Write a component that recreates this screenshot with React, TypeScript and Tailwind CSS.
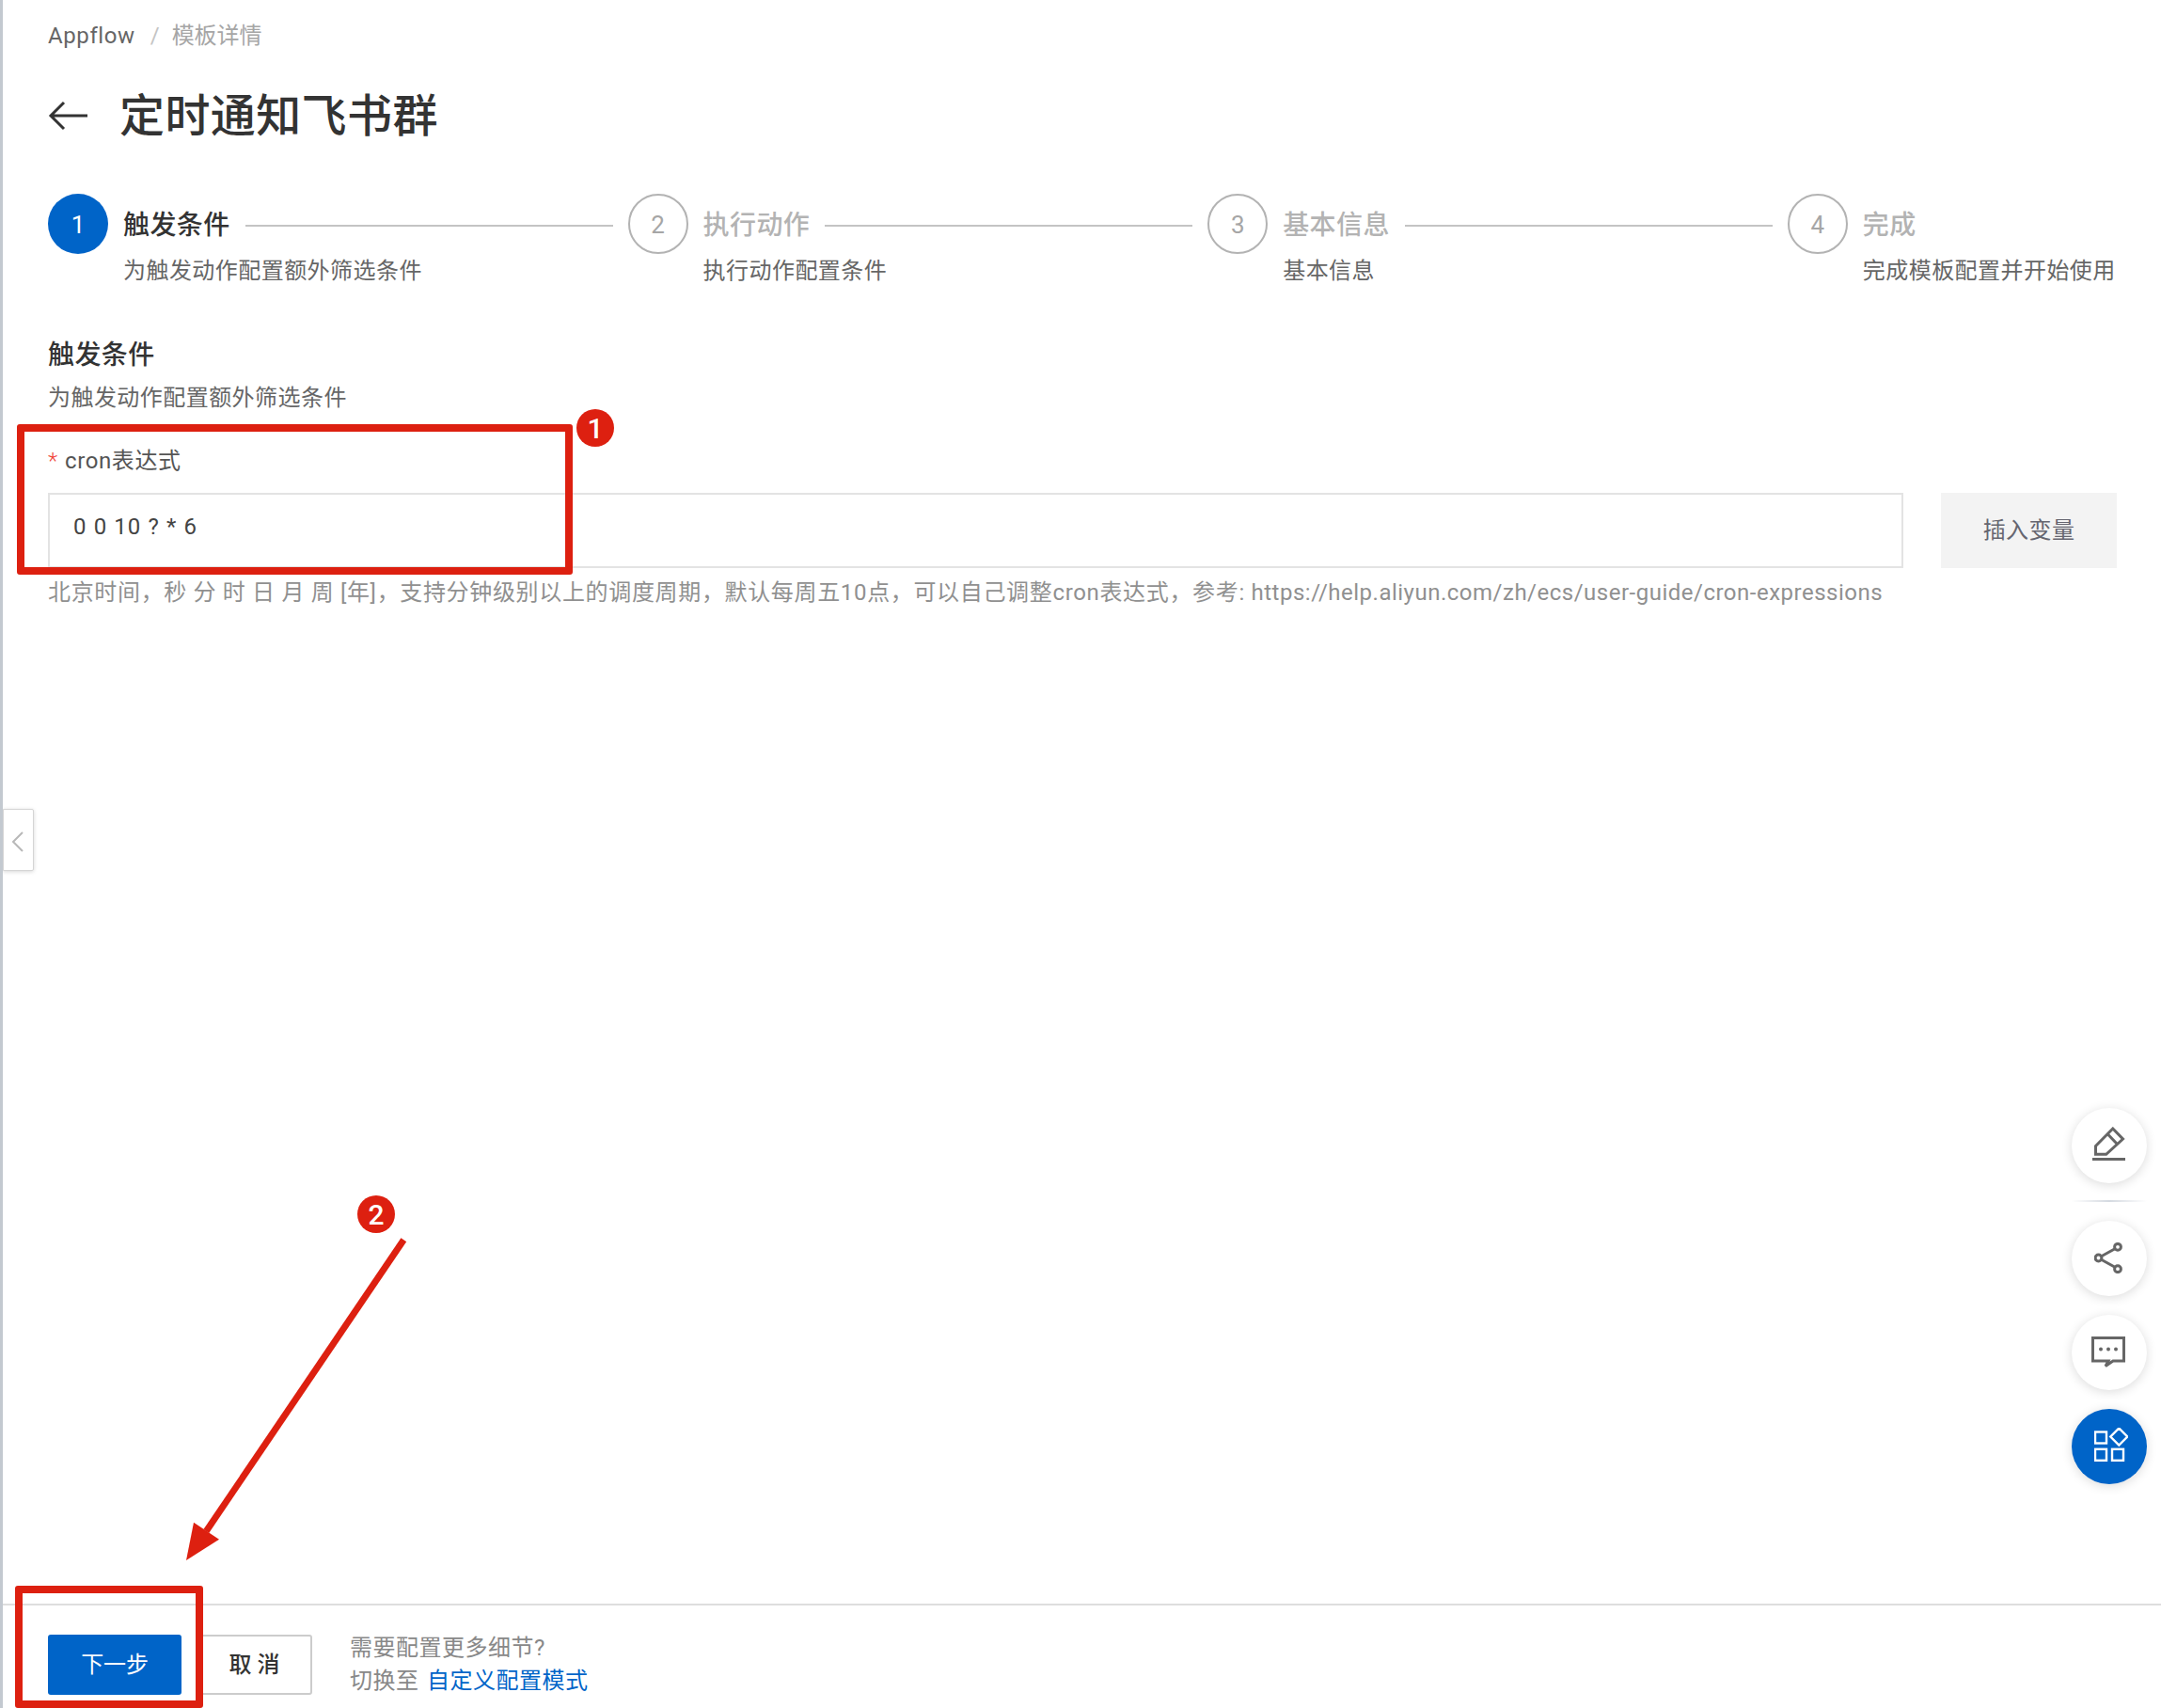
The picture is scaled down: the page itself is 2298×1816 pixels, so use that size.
const font = "font-['Roboto','Noto_Sans_CJK_SC',sans-serif]"

const steps = [
  { no: 1, title: "触发条件", desc: "为触发动作配置额外筛选条件" },
  { no: 2, title: "执行动作", desc: "执行动作配置条件" },
  { no: 3, title: "基本信息", desc: "基本信息" },
  { no: 4, title: "完成", desc: "完成模板配置并开始使用" },
]

const Stepper = () => (
  <div className="flex mt-[50px]">
    {steps.map((step) => {
      const active = step.no === 1
      const last = step.no === 4
      return (
        <div
          key={step.no}
          className={last ? "flex w-[350px] shrink-0" : "flex w-[616.6px] shrink-0 pr-4"}
        >
          {active ? (
            <div className="w-16 h-[64px] pt-[2px] shrink-0 rounded-full bg-[#0064c8] text-white flex items-center justify-center text-[26px]">
              1
            </div>
          ) : (
            <div className="w-16 h-[64px] pt-[2px] shrink-0 rounded-full border-2 border-[#b3b3b3] text-[#a6a6a6] flex items-center justify-center text-[26px]">
              {step.no}
            </div>
          )}
          <div className="ml-4 flex-1 min-w-0">
            <div className="h-16 pt-[3px] flex items-center">
              <span
                className={
                  active
                    ? "text-[28px] font-medium tracking-[0.4px] text-[#333333] whitespace-nowrap"
                    : "text-[28px] font-medium tracking-[0.4px] text-[#b3b3b3] whitespace-nowrap"
                }
              >
                {step.title}
              </span>
              {!last && <div className="ml-4 flex-1 h-[2px] bg-[#c4c4c4]" />}
            </div>
            <p className="text-[24px] leading-[36px] tracking-[0.45px] text-[#666666] whitespace-nowrap">
              {step.desc}
            </p>
          </div>
        </div>
      )
    })}
  </div>
)

const FloatButton = ({ top, blue, children }: { top: string; blue?: boolean; children: React.ReactNode }) => (
  <div
    className={
      (blue ? "bg-[#0064c8] " : "bg-white ") +
      top +
      " absolute right-[15px] w-20 h-20 rounded-full flex items-center justify-center shadow-[0_2px_12px_rgba(0,0,0,0.14)]"
    }
  >
    {children}
  </div>
)

const Annotations = () => (
  <>
    {/* red highlight boxes */}
    <div className="absolute left-[15px] top-[451px] w-[591px] h-[160px] border-[8px] border-[#dd2010] rounded-[3px]" />
    <div className="absolute left-[13px] top-[1686px] w-[200px] h-[130px] border-[8px] border-[#dd2010] rounded-[3px]" />
    <div className="absolute left-[610px] top-[435px] w-10 h-10 rounded-full bg-[#dd2010] text-white flex items-center justify-center text-[30px] font-medium">
      1
    </div>
    <div className="absolute left-[377px] top-[1271px] w-10 h-10 rounded-full bg-[#dd2010] text-white flex items-center justify-center text-[30px] font-medium">
      2
    </div>
    {/* arrow */}
    <svg className="absolute left-[167px] top-[1270px]" width="280" height="400" viewBox="0 0 280 400">
      <line x1="259.3" y1="48.3" x2="49.3" y2="358" stroke="#dd2010" strokeWidth="7" />
      <polygon points="28,389 36,348.7 63,366.7" fill="#dd2010" />
    </svg>
  </>
)

export default function App() {
  return (
    <div className={font + " relative h-[1816px] overflow-hidden bg-white border-l-[3px] border-[#c3c9d0] flex flex-col"}>
      <div className="flex-1 pl-[48px] pr-[47px] pt-[20px]">
        {/* breadcrumb */}
        <div className="flex items-center text-[24px] leading-[36px]">
          <span className="text-[#666666] tracking-[0.6px]">Appflow</span>
          <span className="ml-4 mr-[13px] text-[#c4c4c4]">/</span>
          <span className="text-[#a6a6a6]">模板详情</span>
        </div>

        {/* title */}
        <div className="flex items-center h-16 mt-9">
          <svg className="-translate-y-[1px]" width="42" height="32" viewBox="0 0 42 32" fill="none" stroke="#333333" strokeWidth="3">
            <path d="M3 16h39M17 2 3 16l14 14" />
          </svg>
          <h1 className="ml-[34px] text-[48px] font-medium tracking-[0.4px] text-[#333333] leading-[64px]">定时通知飞书群</h1>
        </div>

        <Stepper />

        {/* form */}
        <h2 className="mt-[52px] text-[28px] leading-[40px] font-medium tracking-[0.4px] text-[#333333]">触发条件</h2>
        <p className="mt-[7px] text-[24px] leading-[36px] tracking-[0.45px] text-[#666666]">为触发动作配置额外筛选条件</p>
        <div className="mt-[31px] flex items-center text-[24px] leading-[36px] text-[#555555]">
          <span className="w-[18px] font-light text-[#f04438]">*</span>
          <span className="tracking-[0.6px]">cron表达式</span>
        </div>
        <div className="mt-4 flex">
          <div className="flex-1 h-20 border-2 border-[#e3e3e3] pl-[25px] pt-[16px] text-[24px] leading-[36px] tracking-[1.1px] text-[#444444]">
            0 0 10 ? * 6
          </div>
          <button className="ml-10 w-[187px] h-20 bg-[#f3f3f3] text-[24px] tracking-[0.4px] text-[#666670]">插入变量</button>
        </div>
        <p className="mt-[8px] text-[24px] leading-[36px] tracking-[0.66px] text-[#909090] whitespace-nowrap">
          北京时间，秒 分 时 日 月 周 [年]，支持分钟级别以上的调度周期，默认每周五10点，可以自己调整cron表达式，参考:{" "}
          <span className="tracking-[0.5px]">https://help.aliyun.com/zh/ecs/user-guide/cron-expressions</span>
        </p>
      </div>

      {/* footer */}
      <div className="h-[111px] shrink-0 border-t-2 border-[#dedede] pl-[48px] pt-[31px] flex">
        <button className="w-[142px] h-16 rounded-[3px] bg-[#0064c8] text-white text-[24px] -tracking-[0.2px]">下一步</button>
        <button className="ml-4 w-[123px] h-16 rounded-[3px] border-2 border-[#cccccc] text-[24px] font-medium text-[#333333]">取 消</button>
        <div className="ml-10 -mt-[3px] text-[24px] leading-[35px] text-[#888888] tracking-[0.5px]">
          <p>需要配置更多细节?</p>
          <p>
            切换至 <span className="ml-[2px] text-[#0064c8]">自定义配置模式</span>
          </p>
        </div>
      </div>

      {/* sidebar collapse handle */}
      <div className="absolute left-0 top-[860px] w-[33px] h-[66px] bg-white border border-[#d5d5d5] rounded-r-[2px] shadow-[0_1px_4px_rgba(0,0,0,0.16)] flex items-center justify-center">
        <svg className="translate-y-[2px] -translate-x-[1px]" width="14" height="22" viewBox="0 0 14 22" fill="none" stroke="#b8b8b8" strokeWidth="2">
          <path d="M12 1 2 11l10 10" />
        </svg>
      </div>

      {/* floating tools */}
      <FloatButton top="top-[1178px]">
        <svg className="-translate-x-[1px] -translate-y-[2px]" width="35" height="36" viewBox="0 0 35 36" fill="none" stroke="#666666" strokeWidth="3">
          <path d="M0 34.5h35" />
          <path d="M3.5 20.5 21.8 2l10.7 11-17.8 16.3H3.5Z" />
          <path d="m16 7.5 10.5 11" />
        </svg>
      </FloatButton>
      <div className="absolute right-[15px] top-[1276px] w-20 h-[2px] bg-[linear-gradient(90deg,#ffffff,#d4d9e0,#ffffff)]" />
      <FloatButton top="top-[1298px]">
        <svg className="-translate-x-[1px] -translate-y-[1px]" width="30" height="33" viewBox="0 0 30 33" fill="none" stroke="#666666" strokeWidth="3">
          <circle cx="4.5" cy="16.5" r="3.4" />
          <circle cx="25" cy="4.8" r="3.4" />
          <circle cx="25" cy="28.2" r="3.4" />
          <path d="m7.5 14.8 14.5-8M7.5 18.2l14.5 8" />
        </svg>
      </FloatButton>
      <FloatButton top="top-[1398px]">
        <svg className="-translate-x-[1px] -translate-y-[1px]" width="36" height="33" viewBox="0 0 36 33" fill="#666666" stroke="none">
          <path d="M1.5 1.5h33v24.5H23l-8 5.5 3-5.5H1.5Z" fill="none" stroke="#666666" strokeWidth="3" />
          <circle cx="10" cy="13.5" r="2" />
          <circle cx="18" cy="13.5" r="2" />
          <circle cx="26" cy="13.5" r="2" />
        </svg>
      </FloatButton>
      <FloatButton top="top-[1498px]" blue>
        <svg className="translate-x-[2px] -translate-y-[2px]" width="36" height="36" viewBox="0 0 36 36" fill="none" stroke="#ffffff" strokeWidth="2.4">
          <rect x="1" y="4.5" width="12" height="12" />
          <rect x="1" y="22.8" width="12" height="12" />
          <rect x="19" y="22.8" width="12" height="12" />
          <path d="m26.3 .5 9 9-9 9-9-9Z" />
        </svg>
      </FloatButton>

      <Annotations />
    </div>
  )
}
